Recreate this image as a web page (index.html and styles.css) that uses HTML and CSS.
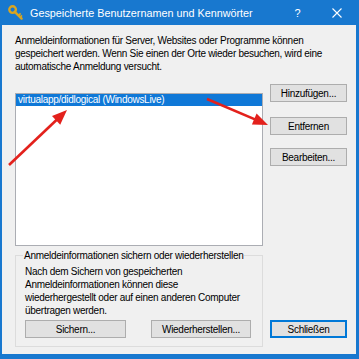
FILE: index.html
```html
<!DOCTYPE html>
<html lang="de">
<head>
<meta charset="utf-8">
<title>Gespeicherte Benutzernamen und Kennwörter</title>
<link rel="stylesheet" href="styles.css">
</head>
<body>
<div class="window">
  <div class="titlebar">
    <svg class="key" width="16" height="16" viewBox="0 0 16 16">
      <circle cx="4.6" cy="4.6" r="3.3" fill="none" stroke="#d9a521" stroke-width="2.4"/>
      <path d="M6.8 6.8 L13.6 13.6" stroke="#d9a521" stroke-width="2.4" stroke-linecap="round"/>
      <path d="M10.5 10.5 L12.6 8.4 M12.2 12.2 L14 10.4" stroke="#d9a521" stroke-width="1.6"/>
    </svg>
    <span class="title">Gespeicherte Benutzernamen und Kennwörter</span>
    <span class="cap help">?</span>
    <span class="cap close">
      <svg width="10" height="10" viewBox="0 0 10 10"><path d="M0.5 0.5 L9.5 9.5 M9.5 0.5 L0.5 9.5" stroke="#fff" stroke-width="1.1"/></svg>
    </span>
  </div>
  <div class="client">
    <p class="intro">Anmeldeinformationen für Server, Websites oder Programme können<br>gespeichert werden. Wenn Sie einen der Orte wieder besuchen, wird eine<br>automatische Anmeldung versucht.</p>
    <div class="main">
      <div class="leftcol">
        <div class="listbox">
          <div class="item selected">virtualapp/didlogical (WindowsLive)</div>
        </div>
        <fieldset class="group">
          <legend>Anmeldeinformationen sichern oder wiederherstellen</legend>
          <p class="group-text">Nach dem Sichern von gespeicherten<br>Anmeldeinformationen können diese<br>wiederhergestellt oder auf einen anderen Computer<br>übertragen werden.</p>
          <div class="group-buttons">
            <button class="btn wide1">Sichern...</button>
            <button class="btn wide2">Wiederherstellen...</button>
          </div>
        </fieldset>
      </div>
      <div class="rightcol">
        <button class="btn side first">Hinzufügen...</button>
        <button class="btn side second">Entfernen</button>
        <button class="btn side third">Bearbeiten...</button>
        <button class="btn side default">Schließen</button>
      </div>
    </div>
  </div>
  <svg class="arrows" width="359" height="359" viewBox="0 0 359 359">
    <line x1="9" y1="165" x2="57" y2="119.5" stroke="#e3211c" stroke-width="2.6"/>
    <polygon points="67,110 60.2,124.7 52,116" fill="#e3211c"/>
    <line x1="207" y1="99" x2="255" y2="119.4" stroke="#e3211c" stroke-width="2.6"/>
    <polygon points="268,125 251.9,124.6 256.6,113.6" fill="#e3211c"/>
  </svg>
</div>
</body>
</html>
```
FILE: styles.css
```css
html, body {
  margin: 0;
  padding: 0;
  background: #ffffff;
}

.window {
  position: relative;
  width: 359px;
  height: 359px;
  display: flex;
  flex-direction: column;
  font-family: "Liberation Sans", Arial, sans-serif;
  font-size: 10px;
  letter-spacing: -0.28px;
  color: #000;
}

.titlebar {
  height: 25px;
  flex: none;
  background: #1878cf;
  display: flex;
  align-items: center;
  padding: 0 3px 0 8px;
  color: #fff;
  letter-spacing: 0;
}

.key {
  flex: none;
}

.title {
  margin-left: 6px;
  font-size: 10.8px;
  flex: 1;
  white-space: nowrap;
}

.cap {
  width: 39px;
  height: 25px;
  display: flex;
  align-items: center;
  justify-content: center;
  font-size: 11px;
}

.client {
  flex: 1;
  min-height: 0;
  background: #f0f0f0;
  border-left: 2px solid #1878cf;
  border-right: 3px solid #1878cf;
  border-bottom: 5px solid #1878cf;
  padding: 9px 9px 7px 13px;
  display: flex;
  flex-direction: column;
}

.intro {
  margin: 0;
  line-height: 13px;
  white-space: nowrap;
}

.main {
  margin-top: 11px;
  display: flex;
  gap: 7px;
  flex: 1;
  min-height: 0;
}

.leftcol {
  width: 248px;
  padding-top: 9px;
  display: flex;
  flex-direction: column;
}

.listbox {
  height: 153px;
  flex: none;
  box-sizing: border-box;
  background: #fff;
  border: 1px solid #abadb3;
}

.item {
  height: 12px;
  line-height: 12px;
  padding-left: 2px;
  white-space: nowrap;
}

.selected {
  background: #0f78d7;
  color: #fff;
}

.group {
  margin: 3px 0 0 0;
  padding: 0 9px 8px 9px;
  border: 1px solid #dcdcdc;
  min-width: 0;
}

.group legend {
  margin-left: -2px;
  padding: 0 1px;
  line-height: 13px;
  white-space: nowrap;
}

.group-text {
  margin: 3px 0 0 0;
  line-height: 13px;
  white-space: nowrap;
}

.group-buttons {
  margin-top: 3px;
  display: flex;
  gap: 25px;
}

.btn {
  height: 18px;
  padding: 0;
  margin: 0;
  font-family: inherit;
  font-size: 10px;
  letter-spacing: inherit;
  color: #000;
  background: #e1e1e1;
  border: 1px solid #adadad;
  border-radius: 0;
  box-sizing: border-box;
}

.wide1 {
  width: 101px;
}

.wide2 {
  width: 100px;
}

.rightcol {
  width: 77px;
  display: flex;
  flex-direction: column;
}

.side {
  width: 77px;
  flex: none;
}

.second {
  margin-top: 15px;
}

.third {
  margin-top: 13px;
}

.default {
  margin-top: auto;
  margin-bottom: 9px;
  border: 1px solid #0078d7;
  box-shadow: inset 0 0 0 1px #0078d7;
}

.arrows {
  position: absolute;
  top: 0;
  left: 0;
  pointer-events: none;
}
```
